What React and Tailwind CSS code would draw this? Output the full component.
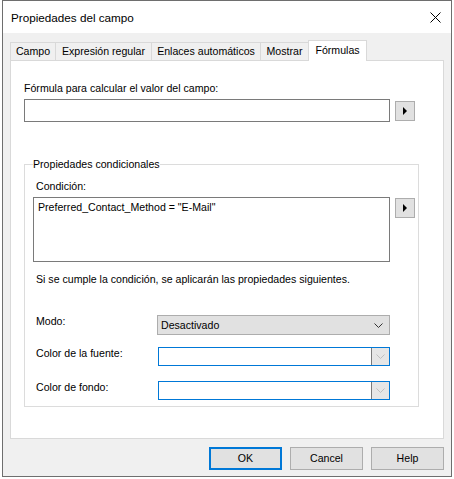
import React from "react";

const tabs = [
  { label: "Campo", w: "w-[45px]" },
  { label: "Expresión regular", w: "w-[96px]" },
  { label: "Enlaces automáticos", w: "w-[109px]" },
  { label: "Mostrar", w: "w-[48px]" },
];

const ArrowButton = ({ className = "" }) => (
  <button className={`flex h-[20px] w-[20px] items-center justify-center border border-[#adadad] bg-[#e1e1e1] ${className}`}>
    <svg width="4" height="8" viewBox="0 0 4 8">
      <polygon points="0,0 4,4 0,8" fill="#000" />
    </svg>
  </button>
);

const Chevron = ({ color }) => (
  <svg width="9" height="5" viewBox="0 0 9 5">
    <polyline points="0.5,0.5 4.5,4.5 8.5,0.5" fill="none" stroke={color} strokeWidth="1" />
  </svg>
);

const ColorCombo = () => (
  <div className="ml-[1px] flex h-[19px] w-[232px] border border-[#0078d7] bg-white">
    <div className="flex-1 border-r border-[#7a7a7a] bg-white"></div>
    <div className="flex w-[17px] items-center justify-center bg-[#e6e6e6]">
      <Chevron color="#bfbfbf" />
    </div>
  </div>
);

const App = () => {
  return (
    <div className="min-h-screen bg-white font-['Liberation_Sans',Arial,sans-serif] text-[10.6px] leading-[13px] text-black">
      <div className="ml-[2px] flex h-[477px] w-[450px] flex-col border border-[#6e6e6e] bg-[#f0f0f0]">
        {/* title bar */}
        <div className="flex h-[32px] items-center justify-between bg-white pl-[8px] pr-[10px]">
          <span className="text-[11.7px]">Propiedades del campo</span>
          <svg width="11" height="11" viewBox="0 0 11 11">
            <path d="M0.5 0.5 L10.5 10.5 M10.5 0.5 L0.5 10.5" stroke="#000" strokeWidth="1" />
          </svg>
        </div>

        <div className="flex flex-col px-[7px] pt-[7px]">
          {/* tabs */}
          <div className="flex h-[20px] items-end">
            {tabs.map((t) => (
              <div
                key={t.label}
                className={`flex h-[18px] ${t.w} items-center justify-center border-l border-t border-[#d9d9d9] bg-[#f0f0f0]`}
              >
                {t.label}
              </div>
            ))}
            <div className="relative z-10 -mb-px flex h-[21px] w-[59px] items-center justify-center border-x border-t border-[#d9d9d9] bg-white pb-[1px]">
              Fórmulas
            </div>
          </div>

          {/* panel */}
          <div className="flex h-[379px] w-[434px] flex-col border border-[#d9d9d9] bg-white pl-[13px] pt-[21px]">
            <div>Fórmula para calcular el valor del campo:</div>
            <div className="mt-[4px] flex items-start">
              <div className="h-[23px] w-[366px] border border-[#7a7a7a] bg-white"></div>
              <ArrowButton className="ml-[5px] mt-[2px]" />
            </div>

            <fieldset className="mt-[36px] h-[249px] w-[395px] border border-[#dcdcdc] pl-[8px]">
              <legend className="px-0">Propiedades condicionales</legend>
              <div className="ml-[3px] mt-[9px]">Condición:</div>
              <div className="mt-[4px] flex items-start">
                <div className="h-[65px] w-[357px] border border-[#7a7a7a] bg-white pl-[4px] pt-[3px]">
                  Preferred_Contact_Method = "E-Mail"
                </div>
                <ArrowButton className="ml-[5px] mt-[1px]" />
              </div>

              <div className="ml-[3px] mt-[11px]">Si se cumple la condición, se aplicarán las propiedades siguientes.</div>

              <div className="mt-[29px] flex items-start pl-[3px]">
                <div className="w-[121px]">Modo:</div>
                <div className="flex h-[20px] w-[233px] items-center justify-between border border-[#adadad] bg-[#e1e1e1] pl-[3px] pr-[6px]">
                  <span>Desactivado</span>
                  <Chevron color="#333" />
                </div>
              </div>

              <div className="mt-[12px] flex items-start pl-[3px]">
                <div className="w-[121px]">Color de la fuente:</div>
                <ColorCombo />
              </div>

              <div className="mt-[15px] flex items-start pl-[3px]">
                <div className="w-[121px]">Color de fondo:</div>
                <ColorCombo />
              </div>
            </fieldset>
          </div>

          {/* buttons */}
          <div className="mt-[8px] flex justify-end gap-[8px]">
            <button className="h-[23px] w-[73px] border-2 border-[#0078d7] bg-[#e1e1e1]">OK</button>
            <button className="h-[23px] w-[73px] border border-[#adadad] bg-[#e1e1e1]">Cancel</button>
            <button className="h-[23px] w-[73px] border border-[#adadad] bg-[#e1e1e1]">Help</button>
          </div>
        </div>
      </div>
    </div>
  );
};

export default App;
